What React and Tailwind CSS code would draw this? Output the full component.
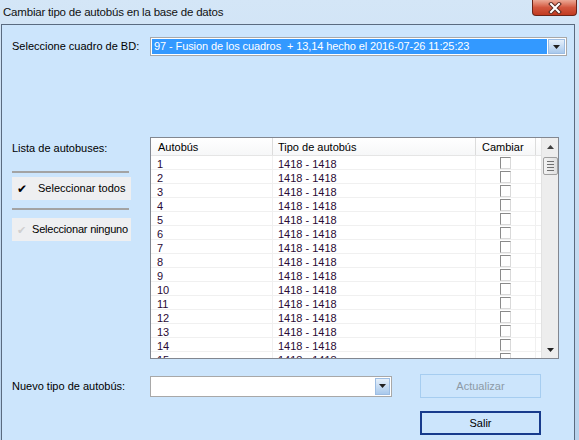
import React from 'react';

const rows = Array.from({ length: 15 }, (_, i) => i + 1);

function Triangle({ up = false, className = '' }) {
  return (
    <svg width="7" height="4" viewBox="0 0 7 4" className={className}>
      {up ? <path d="M3.5 0 L7 4 L0 4 Z" fill="#404040" /> : <path d="M0 0 L7 0 L3.5 4 Z" fill="#202020" />}
    </svg>
  );
}

function ComboButton({ className = '' }) {
  return (
    <div className={`flex items-center justify-center border border-[#9cbde3] bg-gradient-to-b from-[#e6f0fa] to-[#a9c9ec] ${className}`}>
      <Triangle />
    </div>
  );
}

export default function App() {
  return (
    <div className="w-[579px] h-[440px] overflow-hidden flex flex-col bg-gradient-to-b from-[#d4e6f7] to-[#b8d2ec] font-['Liberation_Sans',Arial,sans-serif] text-[11px] text-black">
      {/* Title bar */}
      <div className="h-[24px] shrink-0 flex items-start justify-between">
        <span className="pl-[3px] pt-[4px] text-[11.5px] leading-[16px] text-[#111] tracking-[-0.2px]">
          Cambiar tipo de autobús en la base de datos
        </span>
        <div className="mr-[2px] w-[45px] h-[16px] rounded-b-[4px] border border-t-0 border-[#6a2418] bg-gradient-to-b from-[#eba895] via-[#d2563e] to-[#c13a20] flex items-center justify-center">
          <svg width="14" height="12" viewBox="0 0 14 12">
            <path d="M3 2 L11 10 M11 2 L3 10" stroke="#5a2a22" strokeWidth="4" strokeLinecap="square" />
            <path d="M3 2 L11 10 M11 2 L3 10" stroke="#ffffff" strokeWidth="2" strokeLinecap="square" />
          </svg>
        </div>
      </div>

      {/* Client area */}
      <div className="flex-1 ml-[1px] mr-[4px] border border-b-0 border-[#5a6b80] bg-[#cce5fc] pl-[10px] pt-[12px]">
        {/* BD selector */}
        <div className="flex items-center h-[19px]">
          <span className="w-[138px]">Seleccione cuadro de BD:</span>
          <div className="w-[417px] h-[19px] flex border border-[#a8a8a8] bg-white p-[1px]">
            <div className="flex-1 bg-[#3399ff] text-white flex items-center pl-[2px] tracking-[-0.1px] whitespace-nowrap">
              97 - Fusion de los cuadros&nbsp;&nbsp;+ 13,14 hecho el 2016-07-26 11:25:23
            </div>
            <ComboButton className="w-[17px] ml-[1px]" />
          </div>
        </div>

        {/* Middle */}
        <div className="flex mt-[81px]">
          <div className="w-[138px]">
            <div className="w-[119px] mt-[4px] h-[14px] leading-[14px]">Lista de autobuses:</div>
            <div className="w-[117px] h-[2px] mt-[16px] bg-[#a3a3a3]" />
            <div className="w-[119px] h-[23px] mt-[4px] bg-[#eeeff1] flex items-center whitespace-nowrap">
              <span className="w-[26px] pl-[5px] text-[12px] leading-[12px]">✔</span>
              <span>Seleccionar todos</span>
            </div>
            <div className="w-[117px] h-[2px] mt-[8px] bg-[#a3a3a3]" />
            <div className="w-[119px] h-[23px] mt-[8px] bg-[#eeeff1] flex items-center whitespace-nowrap">
              <span className="w-[20px] pl-[5px] text-[11px] leading-[12px] text-[#d0d0d0]">✔</span>
              <span className="tracking-[-0.2px]">Seleccionar ninguno</span>
            </div>
          </div>

          {/* List view */}
          <div className="w-[409px] h-[222px] border border-[#828790] bg-white flex overflow-hidden">
            <div className="w-[390px] flex flex-col">
              <div className="h-[18px] shrink-0 flex border-b border-[#e5e5e5] bg-gradient-to-b from-white to-[#f6f7f8]">
                <div className="w-[122px] pl-[7px] pt-[1px] flex items-center border-r border-[#dcdcdc]">Autobús</div>
                <div className="w-[203px] pl-[5px] pt-[1px] flex items-center border-r border-[#dcdcdc]">Tipo de autobús</div>
                <div className="w-[60px] pl-[6px] pt-[1px] flex items-center border-r border-[#dcdcdc]">Cambiar</div>
                <div className="flex-1" />
              </div>
              {rows.map((n) => (
                <div key={n} className="h-[14px] shrink-0 flex border-b border-[#f0f0f0] text-[#2a0a35] leading-[13px]">
                  <div className="w-[122px] pl-[6px] pt-[2px] border-r border-[#f0f0f0]">{n}</div>
                  <div className="w-[203px] pl-[5px] pt-[2px] border-r border-[#f0f0f0]">1418 - 1418</div>
                  <div className="w-[60px] flex justify-center pt-[1px] border-r border-[#f0f0f0]">
                    <div className="w-[11px] h-[12px] border border-t-[#8a8a8a] border-l-[#8a8a8a] border-r-[#d9d9d9] border-b-[#d9d9d9] bg-white" />
                  </div>
                  <div className="flex-1" />
                </div>
              ))}
            </div>
            {/* Scrollbar */}
            <div className="w-[17px] bg-[#ededed] border-l border-[#e2e2e2] flex flex-col items-center">
              <div className="h-[17px] flex items-center justify-center">
                <Triangle up />
              </div>
              <div className="w-[15px] h-[18px] mt-[2px] rounded-[2px] border border-[#a0a0a0] bg-gradient-to-r from-[#f3f3f3] to-[#e0e0e0] flex flex-col items-center justify-center gap-[2px]">
                <div className="w-[7px] h-[1px] bg-[#707070]" />
                <div className="w-[7px] h-[1px] bg-[#707070]" />
                <div className="w-[7px] h-[1px] bg-[#707070]" />
                <div className="w-[7px] h-[1px] bg-[#707070]" />
              </div>
              <div className="flex-1" />
              <div className="h-[17px] flex items-center justify-center">
                <Triangle />
              </div>
            </div>
          </div>
        </div>

        {/* New type */}
        <div className="flex items-center h-[24px] mt-[15px]">
          <span className="w-[138px]">Nuevo tipo de autobús:</span>
          <div className="w-[242px] h-[21px] flex border border-[#a8a8a8] bg-white p-[1px]">
            <div className="flex-1" />
            <ComboButton className="w-[15px]" />
          </div>
          <div className="ml-[28px] w-[121px] h-[24px] border border-[#a6cdf0] flex items-center justify-center text-[#8d9aa6]">
            Actualizar
          </div>
        </div>

        <div className="ml-[408px] mt-[13px] w-[121px] h-[24px] border-2 border-[#183b8c] flex items-center justify-center">
          Salir
        </div>
      </div>
    </div>
  );
}
